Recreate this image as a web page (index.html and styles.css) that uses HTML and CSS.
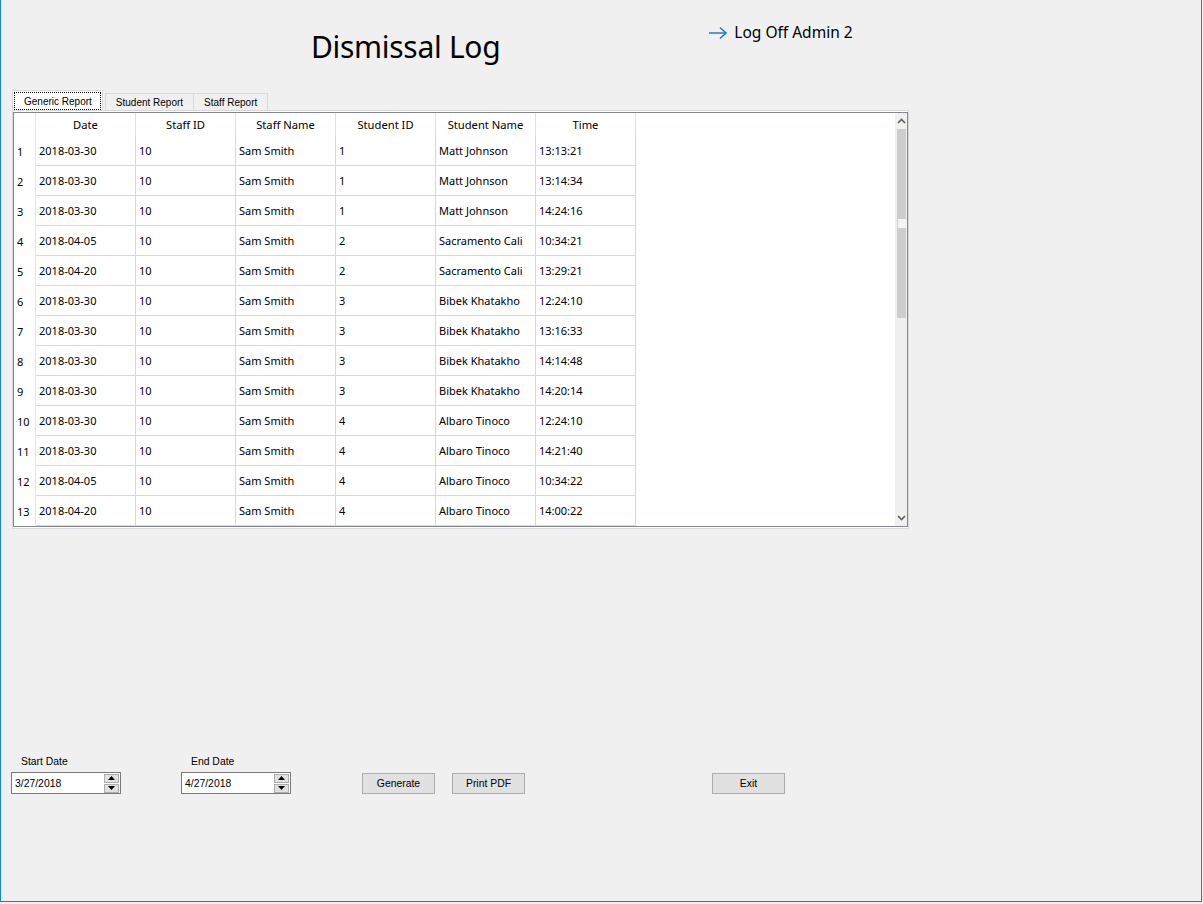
FILE: index.html
```html
<!DOCTYPE html>
<html>
<head>
<meta charset="utf-8">
<link rel="stylesheet" href="styles.css">
</head>
<body>
<div class="window">
  <div class="header">
    <h1 class="title">Dismissal Log</h1>
    <div class="logoff">
      <svg class="arrow" width="20" height="14" viewBox="0 0 20 14"><path d="M1 7 H18 M12 1.5 L18 7 L12 12.5" fill="none" stroke="#1e7fd6" stroke-width="1.6"/></svg>
      <span>Log Off Admin 2</span>
    </div>
  </div>

  <div class="tabs">
    <div class="tab active"><span class="focus">Generic Report</span></div>
    <div class="tab">Student Report</div>
    <div class="tab">Staff Report</div>
  </div>
  <div class="panel">
    <div class="grid">
      <div class="scroll-area">
        <table class="data">
          <colgroup>
            <col class="c-rh"><col class="c"><col class="c"><col class="c"><col class="c"><col class="c"><col class="c"><col>
          </colgroup>
          <thead>
            <tr><th class="rh"></th><th>Date</th><th>Staff ID</th><th>Staff Name</th><th>Student ID</th><th>Student Name</th><th>Time</th><th class="fill"></th></tr>
          </thead>
          <tbody>
            <tr><td class="rh">1</td><td>2018-03-30</td><td>10</td><td>Sam Smith</td><td>1</td><td>Matt Johnson</td><td>13:13:21</td><td class="fill"></td></tr>
            <tr><td class="rh">2</td><td>2018-03-30</td><td>10</td><td>Sam Smith</td><td>1</td><td>Matt Johnson</td><td>13:14:34</td><td class="fill"></td></tr>
            <tr><td class="rh">3</td><td>2018-03-30</td><td>10</td><td>Sam Smith</td><td>1</td><td>Matt Johnson</td><td>14:24:16</td><td class="fill"></td></tr>
            <tr><td class="rh">4</td><td>2018-04-05</td><td>10</td><td>Sam Smith</td><td>2</td><td>Sacramento Cali</td><td>10:34:21</td><td class="fill"></td></tr>
            <tr><td class="rh">5</td><td>2018-04-20</td><td>10</td><td>Sam Smith</td><td>2</td><td>Sacramento Cali</td><td>13:29:21</td><td class="fill"></td></tr>
            <tr><td class="rh">6</td><td>2018-03-30</td><td>10</td><td>Sam Smith</td><td>3</td><td>Bibek Khatakho</td><td>12:24:10</td><td class="fill"></td></tr>
            <tr><td class="rh">7</td><td>2018-03-30</td><td>10</td><td>Sam Smith</td><td>3</td><td>Bibek Khatakho</td><td>13:16:33</td><td class="fill"></td></tr>
            <tr><td class="rh">8</td><td>2018-03-30</td><td>10</td><td>Sam Smith</td><td>3</td><td>Bibek Khatakho</td><td>14:14:48</td><td class="fill"></td></tr>
            <tr><td class="rh">9</td><td>2018-03-30</td><td>10</td><td>Sam Smith</td><td>3</td><td>Bibek Khatakho</td><td>14:20:14</td><td class="fill"></td></tr>
            <tr><td class="rh">10</td><td>2018-03-30</td><td>10</td><td>Sam Smith</td><td>4</td><td>Albaro Tinoco</td><td>12:24:10</td><td class="fill"></td></tr>
            <tr><td class="rh">11</td><td>2018-03-30</td><td>10</td><td>Sam Smith</td><td>4</td><td>Albaro Tinoco</td><td>14:21:40</td><td class="fill"></td></tr>
            <tr><td class="rh">12</td><td>2018-04-05</td><td>10</td><td>Sam Smith</td><td>4</td><td>Albaro Tinoco</td><td>10:34:22</td><td class="fill"></td></tr>
            <tr><td class="rh">13</td><td>2018-04-20</td><td>10</td><td>Sam Smith</td><td>4</td><td>Albaro Tinoco</td><td>14:00:22</td><td class="fill"></td></tr>
          </tbody>
        </table>
      </div>
      <div class="vscroll">
        <div class="sbtn">
          <svg width="9" height="6" viewBox="0 0 9 6"><path d="M1 5 L4.5 1.5 L8 5" fill="none" stroke="#606060" stroke-width="1.6"/></svg>
        </div>
        <div class="track">
          <div class="thumb"><div class="mark"></div></div>
        </div>
        <div class="sbtn">
          <svg width="9" height="6" viewBox="0 0 9 6"><path d="M1 1 L4.5 4.5 L8 1" fill="none" stroke="#606060" stroke-width="1.6"/></svg>
        </div>
      </div>
    </div>
  </div>

  <div class="controls">
    <div class="field">
      <div class="label">Start Date</div>
      <div class="picker"><span class="val">3/27/2018</span>
        <div class="spin"><div class="sp"><svg width="7" height="4" viewBox="0 0 7 4"><path d="M0 4 L3.5 0 L7 4Z" fill="#000"/></svg></div><div class="sp"><svg width="7" height="4" viewBox="0 0 7 4"><path d="M0 0 L3.5 4 L7 0Z" fill="#000"/></svg></div></div>
      </div>
    </div>
    <div class="field field2">
      <div class="label">End Date</div>
      <div class="picker"><span class="val">4/27/2018</span>
        <div class="spin"><div class="sp"><svg width="7" height="4" viewBox="0 0 7 4"><path d="M0 4 L3.5 0 L7 4Z" fill="#000"/></svg></div><div class="sp"><svg width="7" height="4" viewBox="0 0 7 4"><path d="M0 0 L3.5 4 L7 0Z" fill="#000"/></svg></div></div>
      </div>
    </div>
    <div class="btn b-gen">Generate</div>
    <div class="btn b-pdf">Print PDF</div>
    <div class="btn b-exit">Exit</div>
  </div>
</div>
</body>
</html>
```
FILE: styles.css
```css
* { box-sizing: border-box; }
html, body { margin: 0; padding: 0; background: #f0f0f0; }
body { width: 1203px; height: 904px; overflow: hidden; font-family: "Noto Sans", "Open Sans", sans-serif; color: #000; }

.window {
  width: 1202px; height: 902px;
  border-left: 1px solid #1883d7;
  border-right: 1px solid #2b7ac7;
  border-bottom: 1px solid #2b7ac7;
  background: #f0f0f0;
  position: relative;
}

.header { display: flex; align-items: flex-start; height: 91px; }
.title {
  margin: 26px 0 0 310px;
  font-weight: normal; font-size: 30px; line-height: 42px;
  letter-spacing: -0.3px;
}
.logoff { display: flex; align-items: center; margin: 21px 0 0 208px; font-size: 15.5px; line-height: 22px; }
.logoff .arrow { margin-right: 6px; margin-top: 1px; }

.tabs { display: flex; align-items: flex-end; margin-left: 11px; height: 19px; }
.tab {
  font-family: "Liberation Sans", Arial, sans-serif; font-size: 10px;
  height: 17px; line-height: 16px; padding: 1px 10px 0;
  border: 1px solid #d9d9d9; border-bottom: none;
  background: #f0f0f0; margin-left: -1px;
}
.tab.active { height: 20px; background: #fff; margin-left: 0; margin-right: 3px; padding: 1px 1px 0; position: relative; z-index: 1; }
.tab.active .focus { display: block; border: 1px dotted #000; padding: 1px 8px 0 9px; line-height: 15px; }

.panel {
  margin-left: 11px; width: 897px; height: 419px;
  border: 1px solid #d9d9d9; background: #fff; padding: 1px 0;
}
.grid {
  display: flex; height: 415px;
  border: 1px solid #828790; background: #fff;
}
.scroll-area { flex: 1; overflow: hidden; }

.data { border-collapse: separate; border-spacing: 0; table-layout: fixed; width: 100%; font-size: 11px; }
.c-rh { width: 22px; }
.c { width: 100px; }
.data th {
  font-weight: normal; height: 23px; padding: 0; text-align: center;
  border-right: 1px solid #e0e0e0; vertical-align: middle;
  font-size: 11.2px;
}
.data td {
  height: 30px; padding: 0 0 0 3px; white-space: nowrap; overflow: hidden;
  border-right: 1px solid #d8d8d8; border-bottom: 1px solid #d8d8d8;
  vertical-align: middle; line-height: 15px;
}
.data td.rh { border-bottom: 1px solid #fff; padding: 2px 0 0 3px; border-right: 1px solid #e4e4e4; }
.data th.rh { border-right: 1px solid #e4e4e4; }
.data .fill { border-right: none; border-bottom: none; }
.data th.fill { border: none; }

.vscroll { width: 12px; display: flex; flex-direction: column; background: #f0f0f0; }
.sbtn { height: 16px; display: flex; align-items: center; justify-content: center; }
.track { flex: 1; padding-top: 0; }
.thumb { height: 189px; background: #cdcdcd; margin: 0 1px 0 2px; position: relative; }
.mark { position: absolute; left: 1px; top: 90px; width: 8px; height: 9px; background: #f4f4f4; }

.controls { display: flex; align-items: flex-end; margin-top: 226px; margin-left: 10px; height: 39px; }
.field { display: flex; flex-direction: column; }
.field2 { margin-left: 60px; }
.label { font-family: "Liberation Sans", Arial, sans-serif; font-size: 10.4px; margin-left: 10px; height: 17px; line-height: 14px; }
.picker {
  width: 110px; height: 22px; border: 1px solid #7a7a7a; background: #fff;
  display: flex; align-items: center; justify-content: space-between;
  font-family: "Liberation Sans", Arial, sans-serif; font-size: 10.4px;
}
.val { padding-left: 3px; }
.spin { display: flex; flex-direction: column; gap: 1px; margin-right: 1px; }
.sp { width: 15px; height: 9px; background: #e1e1e1; border: 1px solid #adadad; display: flex; align-items: center; justify-content: center; }

.btn {
  width: 73px; height: 21px; background: #e1e1e1; border: 1px solid #adadad;
  font-family: "Liberation Sans", Arial, sans-serif; font-size: 10.4px;
  display: flex; align-items: center; justify-content: center;
}
.b-gen { margin-left: 71px; }
.b-pdf { margin-left: 17px; }
.b-exit { margin-left: 187px; }
```
